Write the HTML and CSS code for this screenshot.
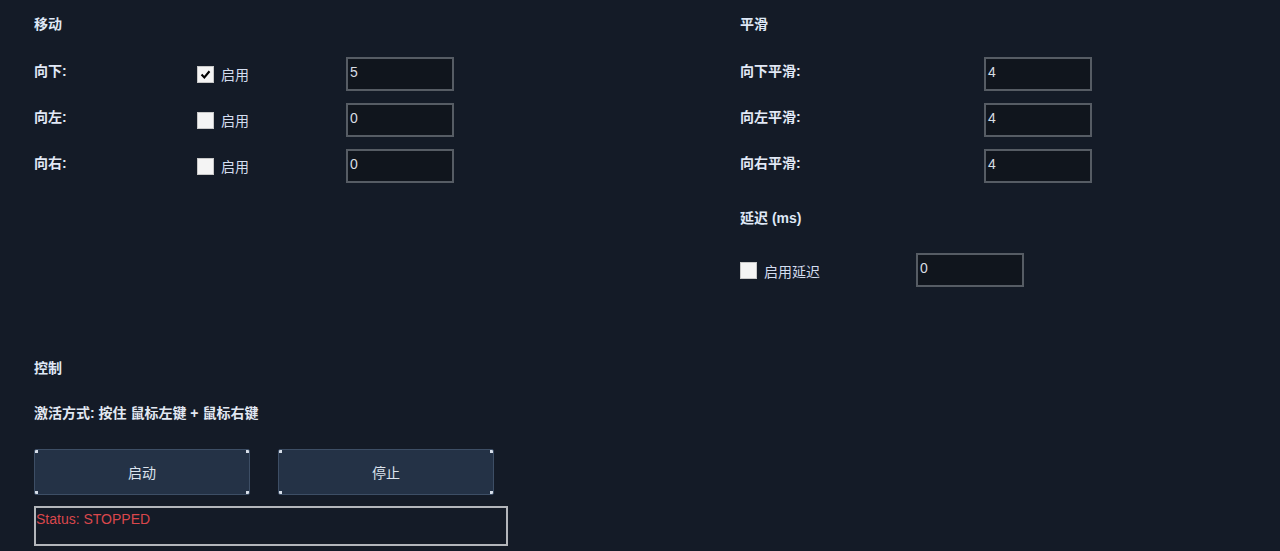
FILE: index.html
```html
<!DOCTYPE html>
<html lang="zh">
<head>
<meta charset="UTF-8">
<title>控制面板</title>
<link rel="stylesheet" href="styles.css">
</head>
<body>

<div class="columns">
    <!-- 移动 -->
    <section class="panel">
        <h2>移动</h2>
        <div class="move-grid">
            <label class="field-label">向下:</label>
            <span class="toggle"><span class="box checked"><svg viewBox="0 0 17 17"><path d="M4 8.5 L7.2 11.8 L13 4.8" fill="none" stroke="#000" stroke-width="2.4"/></svg></span>启用</span>
            <div class="num">5</div>

            <label class="field-label">向左:</label>
            <span class="toggle"><span class="box"></span>启用</span>
            <div class="num">0</div>

            <label class="field-label">向右:</label>
            <span class="toggle"><span class="box"></span>启用</span>
            <div class="num">0</div>
        </div>
    </section>

    <!-- 平滑 -->
    <section class="panel">
        <h2>平滑</h2>
        <div class="smooth-grid">
            <label class="field-label">向下平滑:</label>
            <div class="num">4</div>
            <label class="field-label">向左平滑:</label>
            <div class="num">4</div>
            <label class="field-label">向右平滑:</label>
            <div class="num">4</div>
        </div>

        <h2 class="delay-title">延迟 (ms)</h2>
        <div class="delay-row">
            <span class="toggle"><span class="box"></span>启用延迟</span>
            <div class="num">0</div>
        </div>
    </section>
</div>

<!-- 控制 -->
<section class="control">
    <h2>控制</h2>
    <p class="hint">激活方式: 按住 鼠标左键 + 鼠标右键</p>
    <div class="buttons">
        <button class="btn">启动</button>
        <button class="btn">停止</button>
    </div>
    <div class="status">Status: STOPPED</div>
</section>

</body>
</html>
```

FILE: styles.css
```css
body {
    margin: 0;
    padding: 16px 34px 0;
    background-color: #141b27;
    color: #dfe7f4;
    font-family: "Liberation Sans", "Noto Sans CJK SC", sans-serif;
    font-size: 14px;
    height: 551px;
    box-sizing: border-box;
    overflow: hidden;
}

h2 {
    margin: 0;
    font-size: 14px;
    font-weight: bold;
    line-height: 16px;
    color: #dfe8f6;
}

.columns {
    display: grid;
    grid-template-columns: 706px 1fr;
}

.panel h2 {
    margin-bottom: 25px;
}

.field-label {
    font-weight: bold;
    color: #e2e9f6;
    padding-bottom: 8px;
}

.move-grid {
    display: grid;
    grid-template-columns: 163px 149px 108px;
    row-gap: 12px;
    align-items: center;
}

.smooth-grid {
    display: grid;
    grid-template-columns: 244px 108px;
    row-gap: 12px;
    align-items: center;
}

.num {
    height: 34px;
    box-sizing: border-box;
    border: 2px solid #565c64;
    background-color: #10151d;
    color: #d8dde4;
    padding: 3px 0 0 2px;
    line-height: 20px;
}

.toggle {
    display: flex;
    align-items: center;
    gap: 7px;
    color: #d4def0;
}

.box {
    width: 17px;
    height: 17px;
    box-sizing: border-box;
    background-color: #f4f4f4;
    border: 1px solid #c8c8c8;
    display: inline-block;
}

.box svg {
    display: block;
    width: 15px;
    height: 15px;
}

.delay-title {
    margin-top: 27px;
}

.panel .delay-title {
    margin-bottom: 27px;
}

.delay-row {
    display: grid;
    grid-template-columns: 176px 108px;
    align-items: center;
}

.delay-row .toggle {
    padding-top: 1px;
}

/* 控制 */
.control {
    margin-top: 73px;
}

.hint {
    margin: 29px 0 0;
    line-height: 16px;
    font-weight: bold;
    color: #e2e8f2;
}

.buttons {
    display: flex;
    gap: 28px;
    margin-top: 28px;
}

.btn {
    width: 216px;
    height: 46px;
    border: 1px solid #3d4e65;
    border-radius: 2px;
    color: #dde4ee;
    font-family: inherit;
    font-size: 14px;
    background:
        linear-gradient(#d6dde8, #d6dde8) top left / 3px 3px no-repeat,
        linear-gradient(#d6dde8, #d6dde8) top right / 3px 3px no-repeat,
        linear-gradient(#d6dde8, #d6dde8) bottom left / 3px 3px no-repeat,
        linear-gradient(#d6dde8, #d6dde8) bottom right / 3px 3px no-repeat,
        #243246;
}

.status {
    margin-top: 11px;
    width: 474px;
    height: 40px;
    box-sizing: border-box;
    border: 2px solid #b3b6bb;
    color: #d9474c;
    padding: 1px 0 0 0;
    line-height: 20px;
}
```
